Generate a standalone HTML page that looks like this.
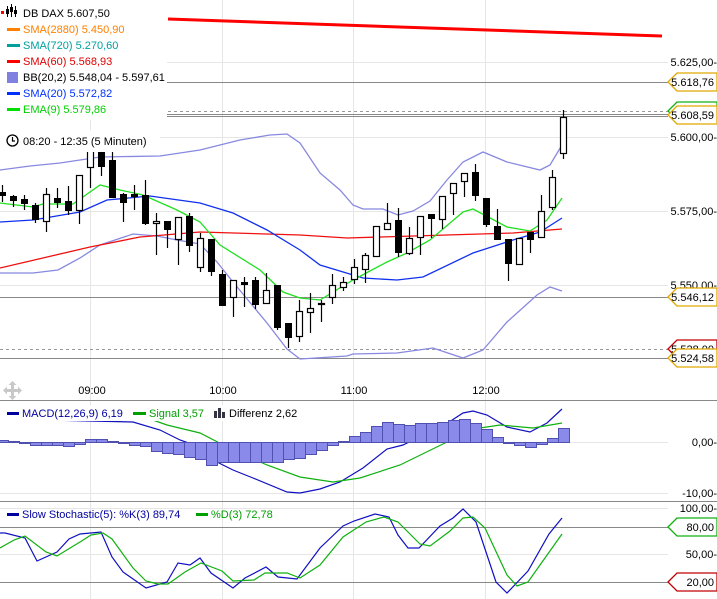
<!DOCTYPE html>
<html><head><meta charset="utf-8"><style>
html,body{margin:0;padding:0;background:#fff;width:717px;height:599px;overflow:hidden}
svg{display:block;font-family:"Liberation Sans",sans-serif;font-size:11px}
</style></head><body>
<svg id="s" width="717" height="599" viewBox="0 0 717 599" xmlns="http://www.w3.org/2000/svg">
<g stroke="#e6e6e6" stroke-width="1">
<line x1="90.5" y1="0" x2="90.5" y2="599"/><line x1="222.5" y1="0" x2="222.5" y2="599"/><line x1="353.5" y1="0" x2="353.5" y2="599"/><line x1="485.5" y1="0" x2="485.5" y2="599"/>
<line x1="0" y1="62.5" x2="668" y2="62.5"/><line x1="0" y1="137.5" x2="668" y2="137.5"/><line x1="0" y1="211.5" x2="668" y2="211.5"/><line x1="0" y1="285.5" x2="668" y2="285.5"/>
<line x1="0" y1="442.5" x2="668" y2="442.5"/><line x1="0" y1="493.5" x2="668" y2="493.5"/><line x1="0" y1="508.5" x2="668" y2="508.5"/><line x1="0" y1="554.5" x2="668" y2="554.5"/>
</g>
<g stroke="#888" stroke-width="1">
<line x1="0" y1="82.5" x2="668" y2="82.5"/>
<line x1="0" y1="114.5" x2="668" y2="114.5"/><line x1="0" y1="116.5" x2="668" y2="116.5"/>
<line x1="0" y1="297.5" x2="668" y2="297.5"/>
<line x1="0" y1="358.5" x2="668" y2="358.5"/>
<line x1="0" y1="400.5" x2="717" y2="400.5"/>
<line x1="0" y1="501.5" x2="717" y2="501.5"/>
<line x1="0" y1="527.5" x2="668" y2="527.5"/>
<line x1="0" y1="582.5" x2="668" y2="582.5"/>
</g>
<g stroke="#999" stroke-dasharray="3,3"><line x1="0" y1="111.5" x2="668" y2="111.5"/><line x1="0" y1="349.5" x2="668" y2="349.5"/></g>
<line x1="168" y1="19" x2="662" y2="36" stroke="#f00" stroke-width="3"/>
<g id="lines" fill="none" stroke-width="1.3"></g>
<g id="hist"></g>
<g id="candles"></g>
<rect x="0" y="0" width="167" height="120" fill="#fff"/>
<rect x="0" y="130" width="160" height="22" fill="#fff"/>
<g>
<rect x="1" y="11" width="3" height="3" fill="#f00"/>
<g stroke="#000" stroke-width="1"><line x1="7.5" y1="6" x2="7.5" y2="17"/><line x1="11.5" y1="4" x2="11.5" y2="17"/><line x1="15.5" y1="6" x2="15.5" y2="17"/></g>
<rect x="6" y="9" width="3" height="5" fill="#000"/><rect x="10" y="7" width="3" height="5" fill="#000"/><rect x="14" y="10" width="3" height="4" fill="#000"/>
<text x="23" y="17" fill="#000">DB DAX 5.607,50</text>
<rect x="7" y="28" width="13" height="3" fill="#ff7f00"/><text x="23" y="33" fill="#ff7f00">SMA(2880) 5.450,90</text>
<rect x="7" y="44" width="13" height="3" fill="#00a0a0"/><text x="23" y="49" fill="#00a0a0">SMA(720) 5.270,60</text>
<rect x="7" y="60" width="13" height="3" fill="#f00"/><text x="23" y="65" fill="#e00000">SMA(60) 5.568,93</text>
<rect x="7" y="72" width="11" height="11" fill="#8080e0"/><text x="23" y="81" fill="#000">BB(20,2) 5.548,04 - 5.597,61</text>
<rect x="7" y="92" width="13" height="3" fill="#0030ff"/><text x="23" y="97" fill="#0030ff">SMA(20) 5.572,82</text>
<rect x="7" y="108" width="13" height="3" fill="#00e000"/><text x="23" y="113" fill="#00d000">EMA(9) 5.579,86</text>
<circle cx="12.5" cy="140.5" r="5.5" fill="none" stroke="#000" stroke-width="1.3"/><path d="M12.5 137v4h2.5" fill="none" stroke="#000" stroke-width="1.2"/>
<text x="23" y="145" fill="#000">08:20 - 12:35 (5 Minuten)</text>
</g>
<g fill="#c8c8c8"><rect x="6" y="389" width="13" height="3"/><rect x="11" y="384" width="3" height="13"/><path d="M12.5 381l4 4h-8zM12.5 400l4-4h-8zM3 390.5l4-4v8zM22 390.5l-4-4v8z"/></g>
<g fill="#000" text-anchor="middle"><text x="92" y="394">09:00</text><text x="223" y="394">10:00</text><text x="354" y="394">11:00</text><text x="486" y="394">12:00</text></g>
<rect x="0" y="405" width="300" height="16" fill="#fff"/>
<rect x="7" y="412" width="12" height="3" fill="#0000a0"/><text x="22" y="417" fill="#0000a0">MACD(12,26,9) 6,19</text>
<rect x="133" y="412" width="13" height="3" fill="#00a000"/><text x="149" y="417" fill="#00a000">Signal 3,57</text>
<g fill="#334"><rect x="214" y="411" width="3" height="7"/><rect x="218" y="408" width="3" height="10"/><rect x="222" y="412" width="3" height="6"/></g>
<text x="229" y="417" fill="#000">Differenz 2,62</text>
<rect x="7" y="513" width="12" height="3" fill="#0000a0"/><text x="22" y="518" fill="#0000a0">Slow Stochastic(5): %K(3) 89,74</text>
<rect x="196" y="513" width="12" height="3" fill="#00a000"/><text x="211" y="518" fill="#00a000">%D(3) 72,78</text>
<g fill="#000" text-anchor="end">
<text x="717" y="66">5.625,00-</text><text x="717" y="141">5.600,00-</text><text x="717" y="215">5.575,00-</text><text x="717" y="289">5.550,00-</text>
<text x="717" y="446">0,00-</text><text x="717" y="497">-10,00-</text><text x="717" y="512">100,00-</text><text x="717" y="558">50,00-</text>
</g>
<g id="tags"></g>
</svg>
<script>
var NS="http://www.w3.org/2000/svg";
function el(p,t,a){var e=document.createElementNS(NS,t);for(var k in a)e.setAttribute(k,a[k]);p.appendChild(e);return e;}
var C=[[192,196,185,202,1],[196,201,195,207,1],[199,204,195,210,1],[205,220,203,223,1],[194,222,188,232,0],[198,203,188,208,1],[201,211,186,215,1],[175,211,175,224,0],[148,168,148,188,0],[149,167,143,176,1],[160,198,152,198,1],[194,203,193,222,1],[194,197,185,210,1],[195,224,180,225,1],[221,224,213,255,0],[221,230,221,248,1],[217,240,217,265,0],[216,246,213,252,1],[238,268,233,272,0],[239,272,239,276,1],[274,306,270,306,1],[280,298,280,317,0],[282,285,277,307,1],[280,305,277,309,1],[290,304,273,304,0],[285,328,285,330,1],[323,338,323,348,1],[311,337,300,342,0],[308,313,293,333,0],[303,304,300,322,0],[285,298,274,304,0],[282,288,277,291,0],[267,280,259,284,0],[255,270,253,283,0],[226,257,226,257,0],[223,230,203,230,0],[220,253,208,257,1],[238,254,227,255,0],[216,238,216,255,0],[214,219,214,238,1],[196,220,196,229,0],[183,194,183,215,0],[173,182,173,197,0],[172,196,164,201,1],[198,225,198,227,1],[226,240,209,240,1],[239,264,239,281,1],[238,265,238,265,0],[232,240,232,253,1],[211,238,195,238,0],[177,208,170,210,0],[117,154,110,159,0]];
var cg=document.getElementById('candles');
C.forEach(function(c,i){var x=2+11*i;
el(cg,'line',{x1:x+.5,y1:c[2],x2:x+.5,y2:c[3],stroke:'#000','stroke-width':1.2});
var h=Math.max(1,c[1]-c[0]);
if(c[4])el(cg,'rect',{x:x-3,y:c[0],width:7,height:h,fill:'#000'});
else el(cg,'rect',{x:x-2.5,y:c[0]+.5,width:6,height:Math.max(1,h-1),fill:'#fff',stroke:'#000','stroke-width':1.2});
});
var H=[2,1,-1,-3,-3,-3,-4,-2,3,3,1,-1,-3,-4,-9,-11,-12,-15,-17,-23,-20,-20,-20,-20,-20,-20,-17,-16,-12,-8,-3,1,6,10,16,20,18,17,19,19,20,22,23,19,13,5,-1,-3,-5,-2,4,14];
var hg=document.getElementById('hist');
H.forEach(function(v,i){var x=2+11*i-5;var y=v>0?442-v:442;
el(hg,'rect',{x:x+.5,y:y+.5,width:11,height:Math.abs(v),fill:'#8a8aea',stroke:'#5050b0','stroke-width':1});});
var lg=document.getElementById('lines');
function pl(pts,col,w){el(lg,'polyline',{points:pts,stroke:col,'stroke-width':w||1.3});}
pl("0,170 30,166 60,163 100,157 160,156 200,150 240,140 270,135 287,134 300,143 320,173 340,190 353,205 363,209 383,209 398,215 413,211 430,201 447,180 463,162 483,152 507,162 540,170 550,165 562,145","#8888e0");
pl("0,273 33,273 58,270 80,258 100,245 133,234 157,236 177,240 200,244 217,262 233,282 267,323 287,349 300,359 347,356 353,354 397,353 433,348 463,358 483,350 507,322 537,295 550,287 562,291","#8888e0");
pl("0,268 90,247 140,237 200,232 300,235 347,238 447,235 513,233 562,229","#f01010");
pl("0,222 33,220 80,212 107,200 150,196 200,203 233,213 267,230 300,250 320,265 363,278 397,280 423,277 473,253 513,240 540,232 562,218","#1030f0");
pl("0,203 33,207 43,204 73,204 100,185 120,190 143,195 177,210 200,222 220,245 260,270 283,292 300,298 320,300 353,280 387,262 407,253 430,240 463,212 473,209 507,227 530,231 547,220 562,198","#20e020");
pl("0,417 47,420 133,422 160,430 180,440 200,447 217,462 233,470 253,478 287,492 300,493 320,489 340,482 363,468 387,449 403,445 423,435 440,428 463,413 473,411 487,415 507,427 530,432 547,423 562,409","#1010c0",1.2);
pl("0,414 133,413 167,425 200,433 233,450 267,465 300,477 333,482 360,478 400,465 447,442 480,428 500,425 533,428 562,423","#10b010",1.2);
pl("0,533 5,533 25,538 37,561 57,552 69,539 80,534 101,532 112,557 123,572 146,588 167,582 178,563 190,565 200,558 211,573 233,588 245,578 266,567 278,577 297,579 320,548 343,526 354,521 375,514 389,517 398,535 408,548 419,548 440,526 453,518 463,509 476,522 496,582 507,593 528,571 549,534 562,518","#1010c0",1.2);
pl("0,548 14,540 25,536 46,552 57,556 80,542 91,535 103,533 112,539 133,568 146,581 158,584 168,584 185,572 201,563 222,571 233,581 254,580 265,573 287,573 300,578 320,565 343,537 366,522 384,517 398,522 420,544 430,546 450,531 463,518 473,517 485,528 507,575 517,586 528,582 540,565 562,534","#10b010",1.2);
var tg=document.getElementById('tags');
function tag(y,txt,col){el(tg,'polygon',{points:"668,"+y+" 677,"+(y-9)+" 717,"+(y-9)+" 717,"+(y+9)+" 677,"+(y+9),fill:'#fff',stroke:col,'stroke-width':1.3});
var t=el(tg,'text',{x:714,y:y+4,'text-anchor':'end',fill:'#000'});t.textContent=txt;}
tag(111,"",'#10b010');
tag(115,"5.608,59",'#e0a800');
tag(82,"5.618,76",'#e0a800');
tag(297,"5.546,12",'#e0a800');
tag(349,"5.528,00",'#c00000');
tag(358,"5.524,58",'#e0a800');
tag(527,"80,00",'#10b010');
tag(582,"20,00",'#c00000');
</script>
</body></html>
